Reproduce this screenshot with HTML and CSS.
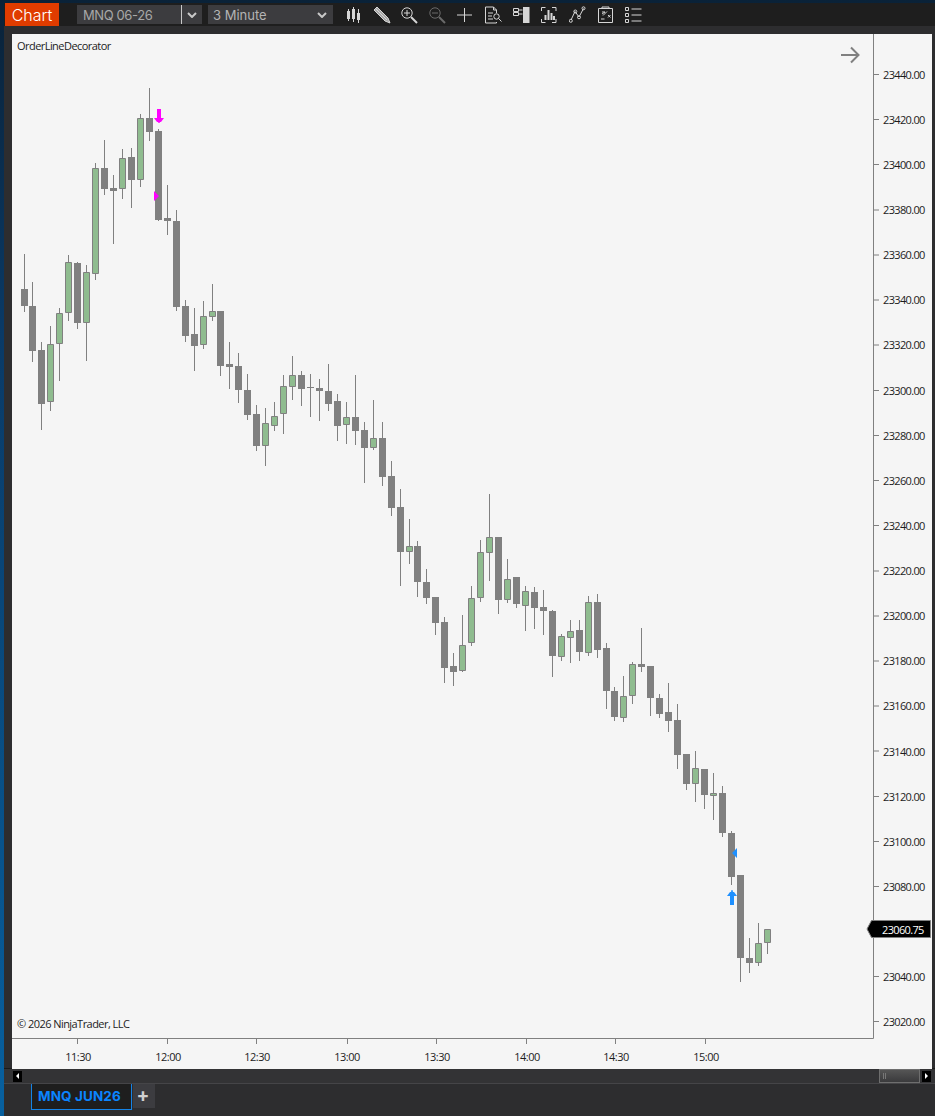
FILE: index.html
```html
<!DOCTYPE html>
<html lang="en">
<head>
<meta charset="utf-8">
<title>MNQ JUN26 Chart</title>
<link rel="stylesheet" href="styles.css">
</head>
<body>
<div class="desktop">
<div class="window">
  <header class="toolbar">
    <div class="title">Chart</div>
    <div class="select instrument">
      <span class="select-label">MNQ 06-26</span>
      <span class="select-btn"><svg class="chev" viewBox="0 0 10 6"><path d="M1 1l4 4 4-4"/></svg></span>
    </div>
    <div class="select interval">
      <span class="select-label">3 Minute</span>
      <svg class="chev" viewBox="0 0 10 6"><path d="M1 1l4 4 4-4"/></svg>
    </div>
    <div class="tools">
      <svg class="ico" viewBox="0 0 18 18"><path d="M3.5 3v12M8.5 1v15M13.5 3v14"/><path class="solid" d="M2 5h3v8H2zM7 3h3v10H7zM12 7h3v7h-3z"/></svg>
      <svg class="ico pencil" viewBox="0 0 18 18"><path d="M1 4l3-3 11 11 2 5-5-2z"/><path d="M3 3l11 11"/></svg>
      <svg class="ico" viewBox="0 0 18 18"><circle cx="6" cy="7" r="5.2"/><path d="M3 7h6M6 4v6"/><path class="thick" d="M10 11l6 6"/></svg>
      <svg class="ico dim" viewBox="0 0 18 18"><circle cx="6" cy="7" r="5.2"/><path d="M3 7h6"/><path class="thick" d="M10 11l6 6"/></svg>
      <svg class="ico" viewBox="0 0 18 18"><path d="M7.5 2v14M0 9h15"/></svg>
      <svg class="ico" viewBox="0 0 18 18"><path d="M11.5 7V4l-3-3H.5v16h11v-1M8.5 1v3h3M3 7h5M3 10h4M3 13h5"/><circle cx="11.5" cy="10.500" r="2.700"/><path d="M13.500 12.500l3 3"/></svg>
      <svg class="ico" viewBox="0 0 18 18"><path d="M.5 2.500h5v3h-5zM.5 6.500h5v3h-5zM5.500 4h4M5.500 8h4"/><path class="solid" d="M10 1h6.500v16H10z"/></svg>
      <svg class="ico" viewBox="0 0 18 18"><path d="M.5 5V1.500h4M11 1.500h4V5M.5 13v3.500h4M11 16.500h4V13"/><path class="thick" d="M4.500 14V9M7.500 14V4M10.500 14V7M13 14v-4"/></svg>
      <svg class="ico" viewBox="0 0 18 18"><path d="M2 14l4-8.500L10 11l4.500-8.500"/><circle cx="1.800" cy="14.800" r="1.500"/><circle cx="6.300" cy="5.500" r="1.500"/><circle cx="10" cy="11.300" r="1.500"/><circle cx="14.500" cy="2.300" r="1.500"/></svg>
      <svg class="ico" viewBox="0 0 18 18"><path d="M1.500 2.500h14v14h-14zM5 2.500V1h7v1.500M5 6h3M5 8l3-2M10 5.500l-4 4M11 9l2.500 2.500M13.500 9L11 11.500M4 13h3.500"/></svg>
      <svg class="ico" viewBox="0 0 18 18"><path d="M.5 1.500h3v3h-3zM.5 7.500h3v3h-3zM.5 13.500h3v3h-3zM6.500 3h10M6.500 9h10M6.500 15h10"/></svg>
    </div>
  </header>

  <main class="content">
    <svg class="chart" viewBox="12 34 920 1035" role="img" aria-label="MNQ 3 minute candlestick chart">
      <text class="label" x="17" y="50">OrderLineDecorator</text>
      <text class="label" x="17" y="1028">© 2026 NinjaTrader, LLC</text>
      <path class="nav-arrow" d="M841 55h17M851 47.500l7.500 7.500-7.500 7.500"/>

      <path class="axis" d="M873.500 34V1038.500H12M874 74.500h5M874 119.500h5M874 164.500h5M874 210h5M874 255h5M874 300h5M874 345h5M874 390.500h5M874 435.500h5M874 480.500h5M874 525.500h5M874 571h5M874 616h5M874 661h5M874 706h5M874 751h5M874 796.500h5M874 841.500h5M874 886.500h5M874 976.500h5M874 1021.500h5M77.500 1039v5M167.500 1039v5M256.500 1039v5M347.500 1039v5M436.500 1039v5M526.500 1039v5M615.500 1039v5M705.500 1039v5"/>
      <g class="ticks">
        <text x="883" y="79">23440.00</text><text x="883" y="124">23420.00</text><text x="883" y="169">23400.00</text><text x="883" y="214">23380.00</text><text x="883" y="259">23360.00</text><text x="883" y="304">23340.00</text><text x="883" y="349">23320.00</text><text x="883" y="395">23300.00</text><text x="883" y="440">23280.00</text><text x="883" y="485">23260.00</text><text x="883" y="530">23240.00</text><text x="883" y="575">23220.00</text><text x="883" y="620">23200.00</text><text x="883" y="665">23180.00</text><text x="883" y="710">23160.00</text><text x="883" y="756">23140.00</text><text x="883" y="801">23120.00</text><text x="883" y="846">23100.00</text><text x="883" y="891">23080.00</text><text x="883" y="981">23040.00</text><text x="883" y="1026">23020.00</text>
      </g>
      <g class="times">
        <text x="78" y="1061">11:30</text><text x="168" y="1061">12:00</text><text x="257" y="1061">12:30</text><text x="347" y="1061">13:00</text><text x="437" y="1061">13:30</text><text x="527" y="1061">14:00</text><text x="616" y="1061">14:30</text><text x="706" y="1061">15:00</text>
      </g>

      <path class="wick" d="M24.500 254V312M32.500 282V362M41.500 342V430M50.500 326V411M59.500 308V381M68.500 255V321M77.500 262V329M86.500 265V361M95.500 163V280M104.500 140V195M113.500 175V244M122.500 149V199M131.500 148V208M140.500 114V187M149.500 88V141M158.500 129V221M167.500 185V235M176.500 210V311M185.500 300V342M194.500 308V371M203.500 301V349M212.500 284V321M220.500 311V376M229.500 342V389M238.500 353V403M247.500 374V420M256.500 405V451M265.500 408V466M274.500 402V431M283.500 375V434M292.500 356V400M301.500 371V406M310.500 374V417M319.500 379V421M328.500 364V411M337.500 394V441M346.500 402V444M355.500 375V445M364.500 422V483M373.500 400V450M382.500 422V486M391.500 461V516M400.500 489V586M409.500 519V564M417.500 541V597M426.500 569V604M435.500 597V635M444.500 617V683M453.500 653V686M462.500 615V672M471.500 586V646M480.500 540V602M489.500 494V581M498.500 537V614M507.500 559V603M516.500 577V608M525.500 586V631M534.500 587V629M543.500 590V635M552.500 610V677M561.500 634V661M570.500 620V663M579.500 620V661M588.500 596V656M597.500 594V658M606.500 643V709M614.500 687V721M623.500 676V722M632.500 662V704M641.500 628V672M650.500 666V716M659.500 694V718M668.500 683V732M677.500 704V769M686.500 754V790M695.500 751V802M704.500 769V809M713.500 773V820M722.500 786V837M731.500 831V885M740.500 875V982M749.500 938V973M758.500 923V966M767.500 929V954"/>
      <path class="down" d="M21 289h7v17h-7zM29 306h7v45h-7zM38 350h7v54h-7zM74 263h7v60h-7zM101 168h7v21h-7zM110 188h7v3h-7zM128 157h7v23h-7zM146 118h7v14h-7zM155 131h7v89h-7zM164 218h7v3h-7zM173 221h7v86h-7zM182 306h7v30h-7zM191 334h7v12h-7zM217 311h7v55h-7zM226 364h7v3h-7zM235 366h7v24h-7zM244 390h7v25h-7zM253 414h7v32h-7zM298 375h7v14h-7zM307 387h7v1h-7zM316 388h7v3h-7zM325 391h7v13h-7zM334 401h7v25h-7zM352 417h7v14h-7zM361 430h7v18h-7zM379 438h7v39h-7zM388 476h7v32h-7zM397 507h7v45h-7zM414 546h7v36h-7zM423 582h7v16h-7zM432 597h7v26h-7zM441 622h7v46h-7zM450 666h7v6h-7zM495 537h7v63h-7zM513 577h7v27h-7zM531 592h7v16h-7zM540 607h7v4h-7zM549 611h7v45h-7zM576 630h7v22h-7zM594 602h7v48h-7zM603 648h7v43h-7zM611 691h7v26h-7zM638 664h7v3h-7zM647 666h7v32h-7zM656 698h7v16h-7zM665 712h7v9h-7zM674 720h7v35h-7zM683 754h7v30h-7zM701 769h7v26h-7zM719 793h7v40h-7zM728 833h7v44h-7zM737 875h7v83h-7zM746 958h7v5h-7z"/>
      <path class="up" d="M47.500 344.500h6v57h-6zM56.500 313.500h6v30h-6zM65.500 262.500h6v50h-6zM83.500 272.500h6v50h-6zM92.500 168.500h6v105h-6zM119.500 158.500h6v30h-6zM137.500 118.500h6v61h-6zM200.500 316.500h6v28h-6zM209.500 311.500h6v5h-6zM262.500 423.500h6v22h-6zM271.500 416.500h6v9h-6zM280.500 386.500h6v27h-6zM289.500 375.500h6v11h-6zM343.500 417.500h6v7h-6zM370.500 438.500h6v9h-6zM406.500 546.500h6v5h-6zM459.500 645.500h6v25h-6zM468.500 598.500h6v44h-6zM477.500 552.500h6v45h-6zM486.500 537.500h6v15h-6zM504.500 579.500h6v20h-6zM522.500 591.500h6v14h-6zM558.500 636.500h6v20h-6zM567.500 631.500h6v6h-6zM585.500 602.500h6v50h-6zM620.500 696.500h6v21h-6zM629.500 664.500h6v31h-6zM692.500 768.500h6v15h-6zM710.500 793.500h6v2h-6zM755.500 943.500h6v19h-6zM764.500 929.500h6v13h-6z"/>

      <path class="magenta" d="M157 109h4v9h3l-3 4h-1l-.500 1h-1l-.500-1h-1l-3-4h3zM154 191l5 5-5 5z"/>
      <path class="blue" d="M730 905v-9h-3l3-4h1l.500-2h1l.500 2h1l3 4h-3v9zM737 848v10l-5-5z"/>

      <g class="price-tag">
        <path d="M871.500 920.500H930.500V937.500H871.500L867 929z"/>
        <text x="882" y="934">23060.75</text>
      </g>
    </svg>
  </main>

  <div class="scrollrow">
    <span class="scroll-btn"><i class="tri-left"></i></span>
    <div class="scroll-thumb"><i class="grip"></i></div>
    <span class="scroll-btn"><i class="tri-right"></i></span>
  </div>

  <nav class="tabs">
    <div class="tab">MNQ JUN26</div>
    <div class="tab-add">+</div>
  </nav>
</div>
</div>
</body>
</html>
```

FILE: styles.css
```css
html, body { margin: 0; height: 100%; overflow: hidden; }
body { background: linear-gradient(180deg, #0a2238 0, #0a3a66 30%, #07609f 100%); }
.desktop { height: 1116px; padding: 3px 0 0 4px; box-sizing: border-box; }
.window { height: 1113px; background: #2d2d2f; display: flex; flex-direction: column; font-family: Inter, "Noto Sans", sans-serif; }

.toolbar { height: 23px; flex: none; background: #1e1e1e; display: flex; align-items: flex-start; padding-left: 1px; }
.title { width: 54px; height: 23px; background: #e03c00; color: #fff; font-size: 16px; font-weight: 300; line-height: 24px; text-align: center; }
.select { height: 19px; margin-top: 2px; background: #3c3c3f; color: #a8a8a8; font-size: 13px; line-height: 20px; display: flex; align-items: center; box-sizing: border-box; }
.select-label { flex: 1; padding-left: 6px; }
.instrument { width: 125px; margin-left: 18px; letter-spacing: -.4px; }
.interval { width: 125px; margin-left: 6px; padding-right: 6px; color: #b4b4b4; }
.interval .select-label { padding-left: 5px; }
.select-btn { width: 21px; height: 19px; border-left: 1px solid #c8c8c8; box-sizing: border-box; display: flex; align-items: center; justify-content: center; }
.chev { width: 10px; height: 6px; fill: none; stroke: #c8c8c8; stroke-width: 2; }
.tools { display: flex; gap: 10px; margin-left: 12px; margin-top: 3px; }
.ico { width: 18px; height: 18px; fill: none; stroke: #d6d6d6; stroke-width: 1; }
.ico .solid { fill: #d6d6d6; stroke: none; }
.ico .thick { stroke-width: 2; }
.ico.dim { stroke: #6a6a6a; }
.ico.pencil { fill: #a8a8a8; }

.content { flex: none; height: 1043px; padding: 8px 0 0 8px; box-sizing: border-box; border-bottom: 1px solid #1a1a1a; }
.chart { display: block; width: 920px; height: 1035px; background: #f5f5f5; }
.label, .ticks, .times, .price-tag text { font-family: "Open Sans", "Noto Sans", sans-serif; font-size: 11px; fill: #1c1c1c; }
.label { letter-spacing: -.55px; }
.ticks, .price-tag text { letter-spacing: -.66px; }
.times { text-anchor: middle; letter-spacing: -.5px; }
.axis { fill: none; stroke: #808080; stroke-width: 1; }
.nav-arrow { fill: none; stroke: #808080; stroke-width: 2; }
.wick { fill: none; stroke: #808080; stroke-width: 1; }
.down { fill: #808080; }
.up { fill: #8fbc8f; stroke: #808080; stroke-width: 1; }
.magenta { fill: #ff00ff; }
.blue { fill: #1e90ff; }
.price-tag path { fill: #000; stroke: #808080; stroke-width: 1; }
.price-tag text { fill: #fff; }

.scrollrow { flex: none; height: 14px; background: #333335; border-bottom: 1px solid #454548; display: flex; align-items: center; padding: 0 4px 0 9px; }
.scroll-btn { width: 9px; height: 11px; background: #000; display: flex; align-items: center; justify-content: center; }
.tri-left { border: 3px solid transparent; border-left: 0; border-right: 3px solid #fff; }
.tri-right { border: 3px solid transparent; border-right: 0; border-left: 3px solid #fff; }
.scroll-thumb { width: 39px; height: 12px; margin-left: auto; margin-right: 2px; background: linear-gradient(180deg, #555 0, #3a3a3c 100%); border: 1px solid #6e6e6e; position: relative; }
.grip { position: absolute; left: 3px; top: 3px; width: 3px; height: 6px; border-left: 1px solid #777; border-right: 1px solid #777; box-sizing: border-box; }

.tabs { flex: 1; display: flex; align-items: flex-start; padding-left: 27px; }
.tab { width: 101px; height: 26px; box-sizing: border-box; background: #1e1e1e; border: 1px solid #1583e6; border-top: 0; color: #0a84ff; font-weight: 700; font-size: 13.5px; letter-spacing: .1px; line-height: 25px; padding-left: 6px; }
.tab-add { width: 22px; height: 24px; margin-left: 1px; padding-right: 2px; box-sizing: border-box; background: #3c3c40; color: #d0d0d0; font-size: 19px; font-weight: 700; line-height: 23px; text-align: center; }
```
